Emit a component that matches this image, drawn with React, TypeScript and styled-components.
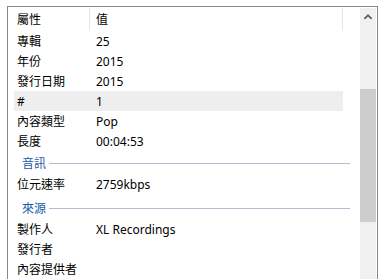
import {FC} from 'react';
import styled, {createGlobalStyle} from 'styled-components';

const GlobalStyle = createGlobalStyle`
  html, body {
    margin: 0;
    padding: 0;
    background: #ffffff;
    overflow: hidden;
  }
  body {
    font-family: "Noto Sans", "Noto Sans CJK TC", sans-serif;
    font-size: 12px;
    color: #000000;
  }
`;

interface RowInterface {
  label: string;
  value?: string;
  isHovered?: boolean;
}

interface GroupInterface {
  title?: string;
  rows: RowInterface[];
}

const GROUPS: GroupInterface[] = [
  {
    rows: [
      {label: '專輯', value: '25'},
      {label: '年份', value: '2015'},
      {label: '發行日期', value: '2015'},
      {label: '#', value: '1', isHovered: true},
      {label: '內容類型', value: 'Pop'},
      {label: '長度', value: '00:04:53'}
    ]
  },
  {
    title: '音訊',
    rows: [{label: '位元速率', value: '2759kbps'}]
  },
  {
    title: '來源',
    rows: [
      {label: '製作人', value: 'XL Recordings'},
      {label: '發行者'},
      {label: '內容提供者'}
    ]
  }
];

const Frame = styled.div`
  margin: 6px 0 0 7px;
  width: 371px;
  height: 273px;
  box-sizing: border-box;
  border: 1px solid #828790;
  border-bottom: none;
  padding: 1px 1px 0;
  display: flex;
  overflow: hidden;
`;

const List = styled.div`
  flex: 1;
  padding: 0 17px 0 5px;
  display: flex;
  flex-direction: column;
  overflow: hidden;
`;

const Header = styled.div`
  height: 23px;
  display: flex;
  align-items: center;
  flex-shrink: 0;
`;

const HeaderCell = styled.div<{$width?: number}>`
  height: 100%;
  display: flex;
  align-items: center;
  box-sizing: border-box;
  ${({$width}) => ($width ? `width: ${$width}px;` : 'flex: 1;')}
  padding-left: ${({$width}) => ($width ? 3 : 6)}px;
  border-right: 1px solid #e5e5e5;
  line-height: 1;
`;

const Row = styled.div<{$hovered?: boolean}>`
  height: 20px;
  display: flex;
  align-items: center;
  flex-shrink: 0;
  background: ${({$hovered}) => ($hovered ? '#eeeeee' : 'transparent')};
`;

const Label = styled.div`
  width: 76px;
  box-sizing: border-box;
  padding-left: 3px;
  white-space: nowrap;
`;

const Value = styled.div`
  flex: 1;
  padding-left: 6px;
  white-space: nowrap;
`;

const GroupHeader = styled.div<{$gap: number}>`
  height: 23px;
  margin-top: ${({$gap}) => $gap}px;
  margin-right: -7px;
  display: flex;
  align-items: center;
  gap: 3px;
  padding-left: 8px;
  color: #1e5aa8;
  flex-shrink: 0;
`;

const GroupLine = styled.div`
  flex: 1;
  height: 1px;
  background: #b6bdd0;
  margin-top: 1px;
`;

const Scrollbar = styled.div`
  width: 16px;
  flex-shrink: 0;
  background: #f0f0f0;
  display: flex;
  flex-direction: column;
  align-items: center;
`;

const ArrowButton = styled.div`
  width: 16px;
  height: 16px;
  display: flex;
  align-items: center;
  justify-content: center;
`;

const Thumb = styled.div`
  width: 16px;
  height: 133px;
  margin-top: 65px;
  background: #cdcdcd;
`;

const UpArrow: FC = () => (
  <svg width="8" height="5" viewBox="0 0 8 5">
    <path d="M0 4 L4 0 L8 4 L8 5 L6.5 5 L4 2.5 L1.5 5 L0 5 Z" fill="#606060" />
  </svg>
);

const App: FC = () => {
  return (
    <>
      <GlobalStyle />
      <Frame>
        <List>
          <Header>
            <HeaderCell $width={76}>屬性</HeaderCell>
            <HeaderCell>值</HeaderCell>
          </Header>
          {GROUPS.map((group, groupIndex) => (
            <div key={groupIndex}>
              {group.title && (
                <GroupHeader $gap={groupIndex > 1 ? 2 : 0}>
                  {group.title}
                  <GroupLine />
                </GroupHeader>
              )}
              {group.rows.map((row) => (
                <Row key={row.label} $hovered={row.isHovered}>
                  <Label>{row.label}</Label>
                  <Value>{row.value}</Value>
                </Row>
              ))}
            </div>
          ))}
        </List>
        <Scrollbar>
          <ArrowButton>
            <UpArrow />
          </ArrowButton>
          <Thumb />
        </Scrollbar>
      </Frame>
    </>
  );
};

export default App;
